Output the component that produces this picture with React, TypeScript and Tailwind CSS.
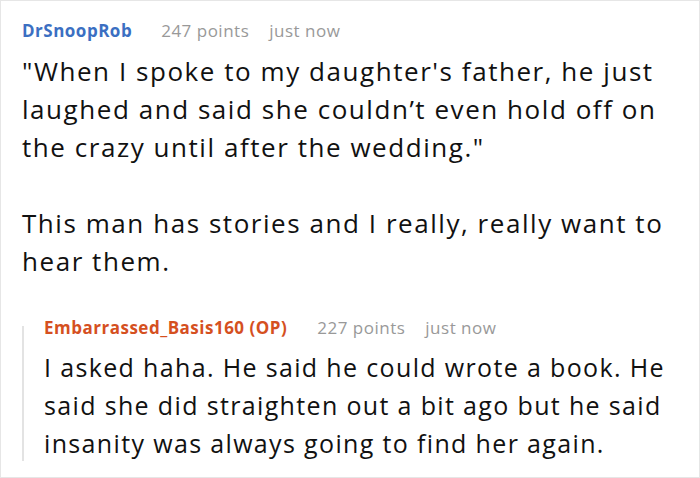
import React from "react";

const font = { fontFamily: '"Open Sans", "Noto Sans", sans-serif' };

export default function App() {
  return (
    <div
      className="w-[700px] h-[478px] bg-white border border-[#e6e6e6] px-[21px] pt-[17px] overflow-hidden"
      style={font}
    >
      <div className="flex items-baseline text-[17px] leading-[26px] tracking-[0.5px]">
        <span className="font-bold text-[#3b6fc2]">DrSnoopRob</span>
        <span className="ml-[29px] text-[#999999]">247 points</span>
        <span className="ml-[20px] text-[#999999]">just now</span>
      </div>
      <div className="mt-[8px] text-[26px] leading-[38px] tracking-[1.55px] text-[#111111] whitespace-nowrap">
        <div>"When I spoke to my daughter's father, he just</div>
        <div>laughed and said she couldn’t even hold off on</div>
        <div>the crazy until after the wedding."</div>
        <div className="h-[38px]"></div>
        <div>This man has stories and I really, really want to</div>
        <div>hear them.</div>
      </div>
      <div className="mt-[35px] flex">
        <div className="w-[2px] mt-[11px] mb-[1px] bg-[#e3e3e3]"></div>
        <div className="pl-[20px]">
          <div className="flex items-baseline text-[17px] leading-[26px] tracking-[0.5px]">
            <span className="font-bold text-[#d5501f]">Embarrassed_Basis160 (OP)</span>
            <span className="ml-[30px] text-[#999999]">227 points</span>
            <span className="ml-[20px] text-[#999999]">just now</span>
          </div>
          <div className="mt-[7px] text-[25px] leading-[38px] tracking-[1.35px] text-[#111111] whitespace-nowrap">
            <div>I asked haha. He said he could wrote a book. He</div>
            <div>said she did straighten out a bit ago but he said</div>
            <div>insanity was always going to find her again.</div>
          </div>
        </div>
      </div>
    </div>
  );
}
